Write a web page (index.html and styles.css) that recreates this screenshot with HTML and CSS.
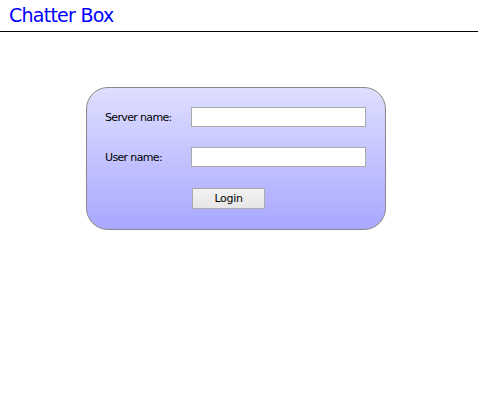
FILE: index.html
```html
<!DOCTYPE html>
<html>
<head>
<meta charset="utf-8">
<link rel="stylesheet" href="styles.css">
</head>
<body>
<header class="header"><h1 class="title">Chatter Box</h1></header>
<main class="main">
  <form class="login-box">
    <label class="label" for="server">Server name:</label>
    <input class="field" id="server" type="text">
    <label class="label" for="user">User name:</label>
    <input class="field" id="user" type="text">
    <span></span>
    <div class="actions"><button class="btn" type="button">Login</button></div>
  </form>
</main>
</body>
</html>
```
FILE: styles.css
```css
html, body { margin: 0; padding: 0; background: #fff; }
body { font-family: "DejaVu Sans", Verdana, sans-serif; }
.header {
  height: 31px;
  border-bottom: 1px solid #000;
  box-sizing: content-box;
}
.title {
  margin: 0;
  padding: 4px 0 0 9px;
  font-size: 19px;
  font-weight: normal;
  color: #0000ff;
  line-height: 22px;
  letter-spacing: -0.75px;
}
.main { padding: 55px 0 0 86px; }
.login-box {
  width: 300px;
  height: 143px;
  box-sizing: border-box;
  border: 1px solid #888;
  border-radius: 22px;
  background: linear-gradient(#dedeff, #a8a8ff);
  padding: 19px 0 0 18px;
  display: grid;
  grid-template-columns: 86px 175px;
  grid-auto-rows: 20px;
  row-gap: 20px;
  align-items: center;
}
.label {
  font-size: 11px;
  color: #000;
  letter-spacing: -0.65px;
}
.field {
  width: 175px;
  height: 20px;
  box-sizing: border-box;
  border: 1px solid #aaa;
  background: #fff;
  margin: 0;
  padding: 0 2px;
}
.actions { grid-row: 3; grid-column: 2; padding-left: 1px; margin-top: 0; align-self: start; }
.btn {
  width: 73px;
  height: 21px;
  box-sizing: border-box;
  border: 1px solid #aaa;
  background: linear-gradient(#f2f2f2, #e6e6e6);
  font-family: "DejaVu Sans", Verdana, sans-serif;
  font-size: 11px;
  letter-spacing: -0.3px;
  color: #000;
  padding: 0;
  margin: 0;
}
```
